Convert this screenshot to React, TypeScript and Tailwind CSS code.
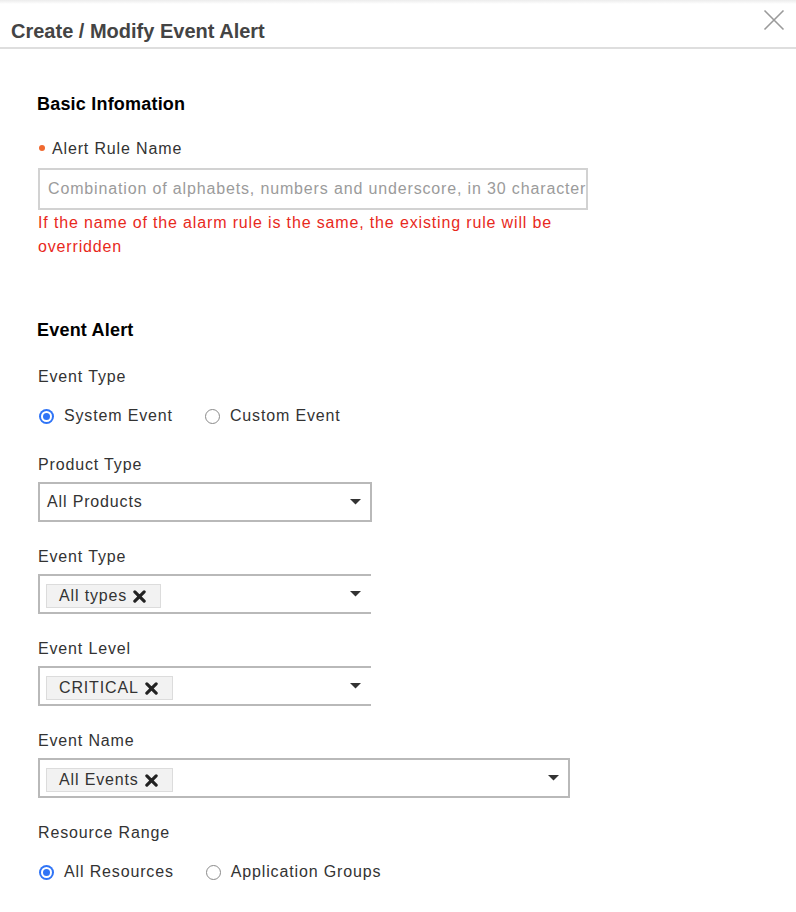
import React from "react";

const font = { fontFamily: '"Liberation Sans", Arial, sans-serif' };

function Caret() {
  return (
    <svg width="11" height="6" viewBox="0 0 11 6" className="shrink-0">
      <path d="M0 0 L11 0 L5.5 5.5 Z" fill="#333" />
    </svg>
  );
}

function XMark() {
  return (
    <svg width="13" height="13" viewBox="0 0 14 14" className="shrink-0">
      <path d="M2 2 L12 12 M12 2 L2 12" stroke="#222" strokeWidth="3.4" strokeLinecap="round" />
    </svg>
  );
}

function Tag({ text }: { text: string }) {
  return (
    <div className="mt-[4px] flex h-[24px] items-center gap-[6px] border border-[#dcdcdc] bg-[#f2f2f2] pl-[12px] pr-[14px] text-[16px] tracking-[0.85px] text-[#333]">
      <span>{text}</span>
      <XMark />
    </div>
  );
}

function Radio({ checked, label }: { checked: boolean; label: string }) {
  return (
    <div className="flex items-center">
      {checked ? (
        <div className="flex h-[15px] w-[15px] items-center justify-center rounded-full bg-[#2f74f6]">
          <div className="flex h-[11px] w-[11px] items-center justify-center rounded-full bg-white">
            <div className="h-[7px] w-[7px] rounded-full bg-[#2f74f6]" />
          </div>
        </div>
      ) : (
        <div className="h-[15px] w-[15px] rounded-full border border-[#8a8a8a] bg-white" />
      )}
      <span className="ml-[10px] text-[16px] tracking-[0.85px] text-[#333]">{label}</span>
    </div>
  );
}

function Label({ children, className = "" }: { children: React.ReactNode; className?: string }) {
  return <div className={`h-[24px] leading-[24px] text-[16px] tracking-[0.85px] text-[#333] ${className}`}>{children}</div>;
}

export default function App() {
  return (
    <div className="relative h-[912px] w-[796px] overflow-hidden bg-white" style={font}>
      <div className="h-[4px] bg-gradient-to-b from-[#ececec] to-white" />
      <div className="flex h-[45px] items-start justify-between border-b-2 border-[#dedede] pl-[11px] pr-[11px]">
        <div className="mt-[15px] text-[20px] font-bold leading-[24px] text-[#444]">Create / Modify Event Alert</div>
        <svg width="22" height="22" viewBox="0 0 22 22" className="mt-[5px]">
          <path d="M1.5 1.5 L20.5 20.5 M20.5 1.5 L1.5 20.5" stroke="#9a9a9a" strokeWidth="1.6" />
        </svg>
      </div>

      <div className="pl-[38px]">
        <div className="mt-[43px] ml-[-1px] h-[24px] text-[18px] font-bold leading-[24px] tracking-[0.2px] text-black">Basic Infomation</div>
        <div className="mt-[21px] flex h-[24px] items-center">
          <div className="mr-[7px] ml-[1px] mt-[-3px] h-[6px] w-[6px] rounded-full bg-[#f0692f]" />
          <span className="text-[16px] tracking-[0.85px] text-[#333]">Alert Rule Name</span>
        </div>
        <div className="mt-[7px] flex h-[42px] w-[550px] items-center overflow-hidden border-2 border-[#d2d2d2] pl-[8px]">
          <span className="whitespace-nowrap text-[16px] tracking-[0.85px] text-[#9b9b9b]">
            Combination of alphabets, numbers and underscore, in 30 characters
          </span>
        </div>
        <div className="mt-[1px] w-[540px] text-[16px] leading-[24px] tracking-[0.85px] text-[#e8291c]">
          If the name of the alarm rule is the same, the existing rule will be overridden
        </div>

        <div className="mt-[59px] ml-[-1px] h-[24px] text-[18px] font-bold leading-[24px] tracking-[0.2px] text-black">Event Alert</div>
        <Label className="mt-[23px]">Event Type</Label>
        <div className="mt-[15px] flex h-[24px] items-center">
          <div className="ml-[1px]"><Radio checked label="System Event" /></div>
          <div className="ml-[32px]"><Radio checked={false} label="Custom Event" /></div>
        </div>

        <Label className="mt-[25px]">Product Type</Label>
        <div className="mt-[5px] flex h-[40px] w-[334px] items-center justify-between border-2 border-[#b9b9b9] pl-[7px] pr-[9px]">
          <span className="text-[16px] tracking-[0.85px] text-[#333]">All Products</span>
          <Caret />
        </div>

        <Label className="mt-[23px]">Event Type</Label>
        <div className="mt-[5px] flex h-[40px] w-[333px] items-center justify-between border-y-2 border-l-2 border-[#b9b9b9] pl-[6px] pr-[10px]">
          <Tag text="All types" />
          <Caret />
        </div>

        <Label className="mt-[23px]">Event Level</Label>
        <div className="mt-[5px] flex h-[40px] w-[333px] items-center justify-between border-y-2 border-l-2 border-[#b9b9b9] pl-[6px] pr-[10px]">
          <Tag text="CRITICAL" />
          <Caret />
        </div>

        <Label className="mt-[23px]">Event Name</Label>
        <div className="mt-[5px] flex h-[40px] w-[532px] items-center justify-between border-2 border-[#b9b9b9] pl-[6px] pr-[9px]">
          <Tag text="All Events" />
          <Caret />
        </div>

        <Label className="mt-[23px]">Resource Range</Label>
        <div className="mt-[15px] flex h-[24px] items-center">
          <div className="ml-[1px]"><Radio checked label="All Resources" /></div>
          <div className="ml-[32px]"><Radio checked={false} label="Application Groups" /></div>
        </div>
      </div>
    </div>
  );
}
